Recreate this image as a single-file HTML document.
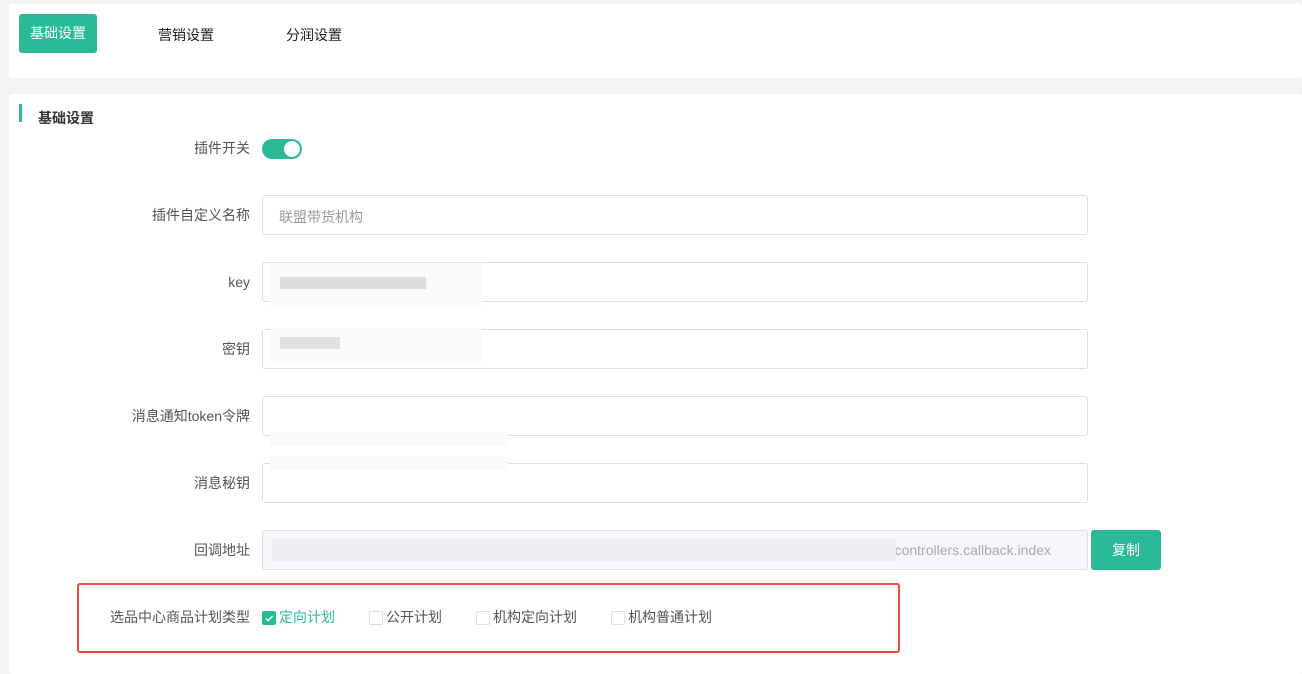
<!DOCTYPE html>
<html><head><meta charset="utf-8"><style>
*{margin:0;padding:0;box-sizing:border-box}
body{width:1302px;height:666px;overflow:hidden;background:#f3f3f3;font-family:"Liberation Sans","Noto Sans CJK SC",sans-serif;font-size:14px;color:#333;position:relative}
.abs{position:absolute}
.card{background:#fff;border-radius:3px}
.lbl{position:absolute;right:1052px;color:#555;font-size:14px;text-align:right;white-space:nowrap;line-height:16px}
.inp{position:absolute;left:262px;width:826px;height:40px;border:1px solid #dcdfe6;border-radius:3px;background:#fff}
.blur{position:absolute;background:#e6e6e6}
.cb{position:absolute;top:2px;width:14px;height:14px;border:1px solid #dcdfe6;border-radius:2px;background:#fff}
.ct{position:absolute;top:0;color:#555;white-space:nowrap;line-height:16px}
</style></head><body>
<div class="abs card" style="left:9px;top:4px;width:1293px;height:74px"></div>
<div class="abs" style="left:19px;top:14px;width:78px;height:39px;background:#2bba98;border-radius:3px;color:#fff;font-size:14px;line-height:39px;text-align:center">基础设置</div>
<div class="abs" style="left:158px;top:25px;font-size:14px;color:#222">营销设置</div>
<div class="abs" style="left:286px;top:25px;font-size:14px;color:#222">分润设置</div>
<div class="abs card" style="left:9px;top:94px;width:1293px;height:580px"></div>
<div class="abs" style="left:19px;top:104px;width:3px;height:18px;background:#2bba98"></div>
<div class="abs" style="left:38px;top:108px;font-size:14px;font-weight:bold;color:#333">基础设置</div>
<div class="lbl" style="top:140px">插件开关</div>
<div class="abs" style="left:262px;top:139px;width:40px;height:20px;border-radius:10px;background:#2bba98"><div class="abs" style="left:22px;top:2px;width:16px;height:16px;border-radius:50%;background:#fff"></div></div>
<div class="lbl" style="top:207px">插件自定义名称</div>
<div class="inp" style="top:195px"><span class="abs" style="left:16px;top:11px;color:#999">联盟带货机构</span></div>
<div class="lbl" style="top:274px">key</div>
<div class="inp" style="top:262px"></div>
<div class="blur" style="left:270px;top:263px;width:212px;height:45px;background:#fafafa"></div>
<div class="blur" style="left:280px;top:277px;width:146px;height:12px;background:#ddd"></div>
<div class="lbl" style="top:341px">密钥</div>
<div class="inp" style="top:329px"></div>
<div class="blur" style="left:270px;top:328px;width:212px;height:36px;background:#fafafa"></div>
<div class="blur" style="left:280px;top:337px;width:60px;height:12px;background:#e0e0e0"></div>
<div class="lbl" style="top:408px">消息通知token令牌</div>
<div class="inp" style="top:396px"></div>
<div class="blur" style="left:270px;top:432px;width:238px;height:14px;background:#fafafa"></div>
<div class="lbl" style="top:475px">消息秘钥</div>
<div class="inp" style="top:463px"></div>
<div class="blur" style="left:270px;top:456px;width:238px;height:14px;background:#fafafa"></div>
<div class="lbl" style="top:542px">回调地址</div>
<div class="inp" style="top:530px;background:#f5f7fa;width:826px"><span class="abs" style="right:36px;top:11px;color:#aaa">controllers.callback.index</span></div>
<div class="blur" style="left:272px;top:539px;width:624px;height:22px;background:#ebedf1"></div>
<div class="abs" style="left:1091px;top:530px;width:70px;height:40px;background:#2bba98;border-radius:3px;color:#fff;line-height:40px;text-align:center">复制</div>
<div class="abs" style="left:77px;top:583px;width:823px;height:70px;border:2px solid #e84c3d;border-radius:3px"></div>
<div class="lbl" style="top:609px">选品中心商品计划类型</div>
<div class="abs" style="left:0;top:609px;width:1302px;height:18px">
<span class="cb" style="left:262px;background:#2bba98;border-color:#2bba98"><svg width="12" height="12" style="position:absolute;left:0;top:0"><path d="M3 6.5l2.2 2.2L9.5 4" stroke="#fff" stroke-width="1.4" fill="none"/></svg></span><span class="ct" style="left:279px;color:#2bba98">定向计划</span>
<span class="cb" style="left:369px"></span><span class="ct" style="left:386px">公开计划</span>
<span class="cb" style="left:476px"></span><span class="ct" style="left:493px">机构定向计划</span>
<span class="cb" style="left:611px"></span><span class="ct" style="left:628px">机构普通计划</span>
</div>
</body></html>
